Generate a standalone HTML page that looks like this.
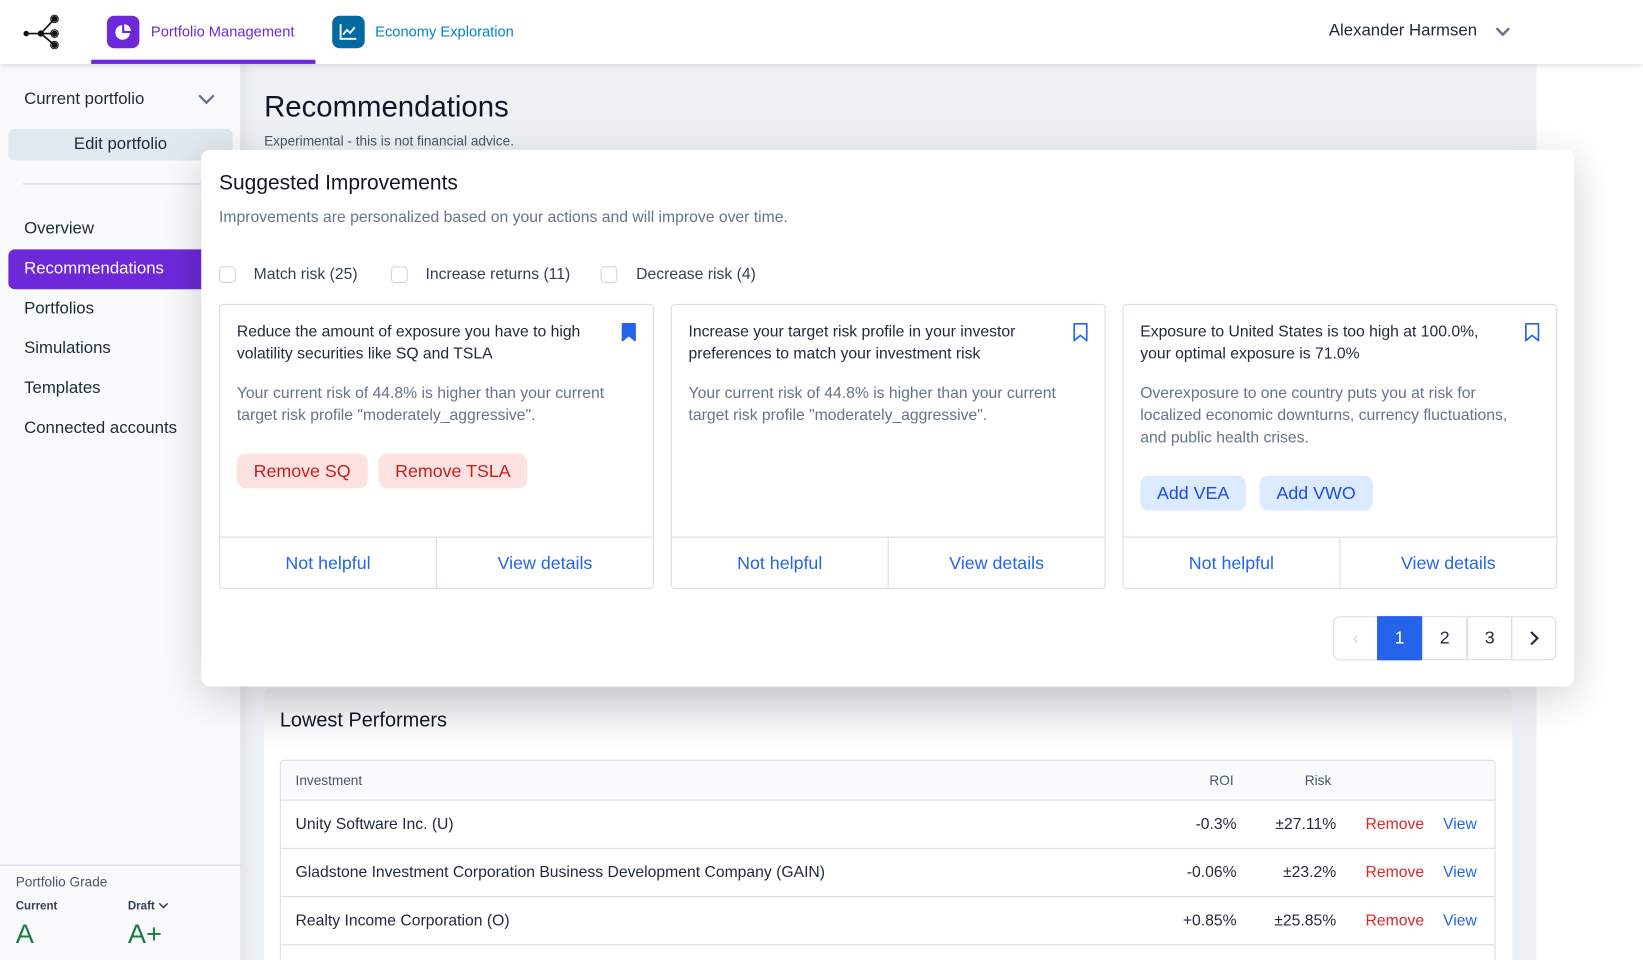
<!DOCTYPE html>
<html><head><meta charset="utf-8"><style>
*{box-sizing:border-box;margin:0;padding:0}
html,body{width:1643px;height:960px;overflow:hidden;background:#fff;font-family:"Liberation Sans",sans-serif;color:#1e293b}
#w{position:absolute;left:0;top:0;width:1568px;height:916px;transform:scale(1.048);transform-origin:0 0;overflow:hidden}
.a{position:absolute}
.hdr{left:0;top:0;width:1568px;height:61px;background:#fff;box-shadow:0 2px 6px rgba(0,0,0,.12);z-index:3}
.main{left:230px;top:61px;width:1236px;height:855px;background:#eef2f7}
.side{left:0;top:61px;width:230px;height:855px;background:#f8fafc;border-right:1px solid #e2e8f0;z-index:1}
.nav{position:absolute;left:8px;width:200px;height:38px;line-height:38px;padding-left:15px;font-size:16px;color:#1e293b}
.modal{left:192px;top:143px;width:1310px;height:512px;background:#fff;border-radius:8px;box-shadow:0 10px 40px rgba(0,0,0,.18);z-index:4}
.cb{position:absolute;top:254px;width:16px;height:16px;border:1px solid #cbd5e1;border-radius:4px;background:#fff}
.cl{position:absolute;top:253px;font-size:15px;color:#334155}
.card{position:absolute;top:147px;width:415px;height:272px;border:1px solid #d5dde8;border-radius:4px}
.ct{position:absolute;left:16px;top:15px;width:350px;font-size:15px;line-height:21px;font-weight:500;color:#1e293b}
.cd{position:absolute;left:16px;top:74px;width:375px;font-size:15px;line-height:21px;color:#64748b}
.bm{position:absolute;right:16px;top:17px}
.ft{position:absolute;left:0;right:0;top:221px;height:50px;border-top:1px solid #d5dde8;display:flex}
.ft div{flex:1;text-align:center;line-height:49px;color:#2563eb;font-size:17px}
.ft div+div{border-left:1px solid #d5dde8}
.btn{position:absolute;top:142px;height:33px;line-height:33px;padding:0 16px;border-radius:8px;font-size:17px}
.r{background:#fde2e2;color:#c81e1e}
.b{background:#dbeafe;color:#1d4ed8}
.pg{position:absolute;top:445px;height:42px;width:43px;text-align:center;line-height:40px;font-size:17px;border:1px solid #d5dde8;color:#1e293b;background:#fff}
.row{position:absolute;left:0;width:1160px;height:46px;border-top:1px solid #d5dde8;font-size:15px;line-height:45px}
.row span{position:absolute}
</style></head><body><div id="w">
<div class="a main"></div>
<div class="a" style="left:230px;top:61px;width:14px;height:855px;background:linear-gradient(90deg,rgba(0,0,0,.05),transparent)"></div>
<div class="a" style="left:252px;top:86px;font-size:28px;font-weight:500;color:#0f172a">Recommendations</div>
<div class="a" style="left:252px;top:127px;font-size:13px;color:#475569">Experimental - this is not financial advice.</div>

<div class="a" style="left:252px;top:657px;width:1191px;height:259px;background:linear-gradient(#e6e8eb,#fff 60px);border-radius:6px 6px 0 0;overflow:hidden">
 <div class="a" style="left:15px;top:20px;font-size:19px;font-weight:500;color:#0f172a">Lowest Performers</div>
 <div class="a" style="left:15px;top:68px;width:1160px;height:240px;border:1px solid #d5dde8;border-radius:4px;background:#fff;overflow:hidden">
  <div class="a" style="left:0;top:0;width:1160px;height:37px;background:#f8fafc;font-size:13px;color:#475569;line-height:37px">
   <span class="a" style="left:14px">Investment</span><span class="a" style="left:886px">ROI</span><span class="a" style="left:977px">Risk</span></div>
  <div class="row" style="top:37px"><span style="left:14px">Unity Software Inc. (U)</span><span style="right:248px">-0.3%</span><span style="right:153px">±27.11%</span><span style="left:1035px;color:#e02424">Remove</span><span style="left:1109px;color:#2563eb">View</span></div>
  <div class="row" style="top:83px"><span style="left:14px">Gladstone Investment Corporation Business Development Company (GAIN)</span><span style="right:248px">-0.06%</span><span style="right:153px">±23.2%</span><span style="left:1035px;color:#e02424">Remove</span><span style="left:1109px;color:#2563eb">View</span></div>
  <div class="row" style="top:129px"><span style="left:14px">Realty Income Corporation (O)</span><span style="right:248px">+0.85%</span><span style="right:153px">±25.85%</span><span style="left:1035px;color:#e02424">Remove</span><span style="left:1109px;color:#2563eb">View</span></div>
  <div class="row" style="top:175px"></div>
 </div>
</div>

<div class="a side">
 <div class="a" style="left:23px;top:25px;font-size:16px">Current portfolio</div>
 <svg class="a" style="left:188px;top:28px" width="18" height="12" viewBox="0 0 18 12"><path d="M2 2l7 7 7-7" fill="none" stroke="#64748b" stroke-width="2.2"/></svg>
 <div class="a" style="left:8px;top:62px;width:214px;height:30px;background:#e2e8f0;border-radius:6px;text-align:center;line-height:30px;font-size:16px">Edit portfolio</div>
 <div class="a" style="left:22px;top:114px;width:190px;height:1px;background:#cbd5e1"></div>
 <div class="nav" style="top:139px">Overview</div>
 <div class="nav" style="top:177px;background:#6d28d9;color:#fff;border-radius:6px 0 0 6px;width:230px">Recommendations</div>
 <div class="nav" style="top:215px">Portfolios</div>
 <div class="nav" style="top:253px">Simulations</div>
 <div class="nav" style="top:291px">Templates</div>
 <div class="nav" style="top:329px">Connected accounts</div>
 <div class="a" style="left:0;top:764px;width:230px;height:1px;background:#cbd5e1"></div>
 <div class="a" style="left:15px;top:773px;font-size:13px;color:#475569">Portfolio Grade</div>
 <div class="a" style="left:15px;top:798px;font-size:11px;font-weight:bold;color:#334155">Current</div>
 <div class="a" style="left:122px;top:798px;font-size:11px;font-weight:bold;color:#334155">Draft <svg width="10" height="7" viewBox="0 0 10 7"><path d="M1 1l4 4 4-4" fill="none" stroke="#334155" stroke-width="1.5"/></svg></div>
 <div class="a" style="left:15px;top:815px;font-size:26px;color:#15803d">A</div>
 <div class="a" style="left:122px;top:815px;font-size:26px;color:#15803d">A+</div>
</div>

<div class="a hdr">
 <svg class="a" style="left:20px;top:13px" width="40" height="34" viewBox="0 0 40 34">
  <g stroke="#111" stroke-width="1.6" fill="none"><path d="M5 19H19M19 19L32 5M19 19H32M19 19L32 30"/></g>
  <circle cx="5" cy="19" r="2.6" fill="#111"/><circle cx="19" cy="19" r="3" fill="#111"/>
  <g fill="#111" stroke="#111" stroke-width="1.2"><circle cx="32" cy="5" r="2.2"/><circle cx="32" cy="19" r="2.2"/><circle cx="32" cy="30" r="2.2"/></g>
  <g fill="none" stroke="#111" stroke-width="1"><circle cx="32" cy="5" r="3.6"/><circle cx="32" cy="19" r="3.6"/><circle cx="32" cy="30" r="3.6"/></g>
 </svg>
 <div class="a" style="left:102px;top:15px;width:31px;height:31px;border-radius:7px;background:#6d28d9"></div>
 <svg class="a" style="left:107px;top:20px" width="21" height="21" viewBox="0 0 21 21"><path d="M9.5 4A7 7 0 1 0 17 11.5H9.5Z" fill="#fff"/><path d="M11.5 3A7 7 0 0 1 18 9.5H11.5Z" fill="#fff"/></svg>
 <div class="a" style="left:144px;top:22px;font-size:14px;color:#6d28d9">Portfolio Management</div>
 <div class="a" style="left:87px;top:57px;width:214px;height:4px;background:#6d28d9"></div>
 <div class="a" style="left:317px;top:15px;width:31px;height:31px;border-radius:7px;background:#0369a1"></div>
 <svg class="a" style="left:322px;top:20px" width="21" height="21" viewBox="0 0 21 21"><path d="M3 3V17H18" fill="none" stroke="#fff" stroke-width="1.8"/><path d="M5.5 13L9 8.5L12 11.5L16.5 6" fill="none" stroke="#fff" stroke-width="1.8"/></svg>
 <div class="a" style="left:358px;top:22px;font-size:14px;color:#0284c7">Economy Exploration</div>
 <div class="a" style="left:1268px;top:21px;font-size:16px;color:#1e293b">Alexander Harmsen</div>
 <svg class="a" style="left:1426px;top:25px" width="16" height="11" viewBox="0 0 16 11"><path d="M2 2l6 6 6-6" fill="none" stroke="#64748b" stroke-width="2.4"/></svg>
</div>

<div class="a modal">
 <div class="a" style="left:17px;top:21px;font-size:20px;font-weight:500;color:#0f172a">Suggested Improvements</div>
 <div class="a" style="left:17px;top:56px;font-size:15px;color:#64748b">Improvements are personalized based on your actions and will improve over time.</div>
 <div class="cb" style="left:17px;top:111px"></div><div class="cl" style="left:50px;top:110px">Match risk (25)</div>
 <div class="cb" style="left:181px;top:111px"></div><div class="cl" style="left:214px;top:110px">Increase returns (11)</div>
 <div class="cb" style="left:381px;top:111px"></div><div class="cl" style="left:415px;top:110px">Decrease risk (4)</div>

 <div class="card" style="left:17px">
  <div class="ct">Reduce the amount of exposure you have to high volatility securities like SQ and TSLA</div>
  <svg class="bm" width="14" height="18" viewBox="0 0 14 18"><path d="M1 1H13V17L7 12L1 17Z" fill="#2563eb" stroke="#2563eb" stroke-width="1.5" stroke-linejoin="round"/></svg>
  <div class="cd">Your current risk of 44.8% is higher than your current target risk profile "moderately_aggressive".</div>
  <div class="btn r" style="left:16px">Remove SQ</div><div class="btn r" style="left:151px">Remove TSLA</div>
  <div class="ft"><div>Not helpful</div><div>View details</div></div>
 </div>
 <div class="card" style="left:448px">
  <div class="ct">Increase your target risk profile in your investor preferences to match your investment risk</div>
  <svg class="bm" width="14" height="18" viewBox="0 0 14 18"><path d="M1 1H13V17L7 12L1 17Z" fill="none" stroke="#2563eb" stroke-width="1.6" stroke-linejoin="round"/></svg>
  <div class="cd">Your current risk of 44.8% is higher than your current target risk profile "moderately_aggressive".</div>
  <div class="ft"><div>Not helpful</div><div>View details</div></div>
 </div>
 <div class="card" style="left:879px">
  <div class="ct">Exposure to United States is too high at 100.0%, your optimal exposure is 71.0%</div>
  <svg class="bm" width="14" height="18" viewBox="0 0 14 18"><path d="M1 1H13V17L7 12L1 17Z" fill="none" stroke="#2563eb" stroke-width="1.6" stroke-linejoin="round"/></svg>
  <div class="cd">Overexposure to one country puts you at risk for localized economic downturns, currency fluctuations, and public health crises.</div>
  <div class="btn b" style="left:16px;top:163px">Add VEA</div><div class="btn b" style="left:130px;top:163px">Add VWO</div>
  <div class="ft"><div>Not helpful</div><div>View details</div></div>
 </div>

 <div class="pg" style="left:1080px;border-radius:6px 0 0 6px;color:#cbd5e1">&#8249;</div>
 <div class="pg" style="left:1122px;background:#2563eb;color:#fff;border-color:#2563eb">1</div>
 <div class="pg" style="left:1165px">2</div>
 <div class="pg" style="left:1208px">3</div>
 <div class="pg" style="left:1250px;border-radius:0 6px 6px 0">
  <svg width="10" height="14" viewBox="0 0 10 14" style="margin-top:13px"><path d="M2 1l6 6-6 6" fill="none" stroke="#1e293b" stroke-width="2"/></svg></div>
</div>
</div></body></html>
